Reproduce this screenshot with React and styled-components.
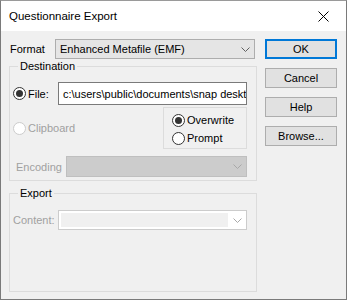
import React from 'react';
import styled, { createGlobalStyle } from 'styled-components';

const GlobalStyle = createGlobalStyle`
  html, body {
    margin: 0;
    padding: 0;
    background: #4a4a4a;
  }
  body {
    font-family: "Liberation Sans", Arial, sans-serif;
    font-size: 11px;
    color: #000;
  }
`;

const Window = styled.div`
  width: 345px;
  height: 298px;
  border: 1px solid #7a7a7a;
  border-top-color: #9a9a9a;
  background: #f0f0f0;
  display: flex;
  flex-direction: column;
  overflow: hidden;
`;

const TitleBar = styled.div`
  height: 30px;
  background: #fff;
  display: flex;
  align-items: center;
  justify-content: space-between;
  padding: 0 0 0 8px;
  font-size: 11.5px;
`;

const CloseBox = styled.div`
  width: 46px;
  height: 30px;
  display: flex;
  align-items: center;
  justify-content: center;
`;

const Body = styled.div`
  flex: 1;
  display: flex;
  padding: 8px 0 0 8px;
`;

const LeftCol = styled.div`
  width: 248px;
  display: flex;
  flex-direction: column;
`;

const RightCol = styled.div`
  margin-left: 8px;
  display: flex;
  flex-direction: column;
  gap: 9px;
`;

const Row = styled.div`
  display: flex;
  align-items: center;
  height: ${(p) => p.h || 20}px;
  margin-top: ${(p) => p.mt || 0}px;
`;

const Label = styled.span`
  box-sizing: border-box;
  width: ${(p) => p.w}px;
  padding-left: ${(p) => p.pl || 0}px;
  color: ${(p) => (p.disabled ? '#a0a0a0' : '#000')};
  white-space: nowrap;
  flex-shrink: 0;
`;

const Select = styled.div`
  width: ${(p) => p.w}px;
  height: ${(p) => p.h || 20}px;
  box-sizing: border-box;
  display: flex;
  align-items: center;
  justify-content: space-between;
  padding: ${(p) => (p.inset ? '2px 0 2px 2px' : '0 0 0 4px')};
  border: 1px solid ${(p) => p.border || '#adadad'};
  background: ${(p) => p.bg || '#e5e5e5'};
  white-space: nowrap;
  line-height: 14px;
`;

const InnerField = styled.div`
  flex: 1;
  height: 100%;
  background: #f0f0f0;
`;

const Arrow = styled.div`
  width: 18px;
  display: flex;
  justify-content: center;
  flex-shrink: 0;
`;

const Group = styled.fieldset`
  margin: 0;
  padding: 0 9px 0 3px;
  border: 1px solid #dcdcdc;
  height: ${(p) => p.h}px;
  box-sizing: border-box;
  display: flex;
  flex-direction: column;
  margin-top: ${(p) => p.mt || 0}px;
  min-width: 0;
`;

const Legend = styled.legend`
  padding: 0 2px;
  margin-left: 5px;
  line-height: 14px;
`;

const TextInput = styled.div`
  width: 189px;
  height: 23px;
  box-sizing: border-box;
  border: 1px solid #7a7a7a;
  background: #fff;
  display: flex;
  align-items: center;
  padding-left: 4px;
  overflow: hidden;
  white-space: nowrap;
  margin-left: auto;
`;

const RadioItem = styled.div`
  display: flex;
  align-items: center;
  gap: 2px;
  line-height: 14px;
  color: ${(p) => (p.disabled ? '#a0a0a0' : '#000')};
`;

const Circle = styled.span`
  width: 13px;
  height: 13px;
  box-sizing: border-box;
  border-radius: 50%;
  border: 1px solid ${(p) => (p.disabled ? '#cccccc' : '#333')};
  background: #fff;
  display: flex;
  align-items: center;
  justify-content: center;
  &::after {
    content: '';
    width: 7px;
    height: 7px;
    border-radius: 50%;
    background: ${(p) => (p.checked ? '#333' : 'transparent')};
  }
`;

const ModeBox = styled.div`
  width: 84px;
  height: 42px;
  box-sizing: border-box;
  border: 1px solid #dcdcdc;
  margin-left: auto;
  padding: 5px 0 0 8px;
  display: flex;
  flex-direction: column;
  gap: 4px;
`;

const Button = styled.div`
  width: 72px;
  height: 20px;
  box-sizing: border-box;
  border: ${(p) => (p.primary ? '2px solid #0078d7' : '1px solid #adadad')};
  background: #e1e1e1;
  display: flex;
  align-items: center;
  justify-content: center;
  line-height: 14px;
`;

const Chevron = ({ color = '#606060' }) => (
  <svg width="9" height="5" viewBox="0 0 9 5">
    <path d="M0.5 0.5 L4.5 4.5 L8.5 0.5" fill="none" stroke={color} strokeWidth="1" />
  </svg>
);

const Radio = ({ checked, disabled, children }) => (
  <RadioItem disabled={disabled}>
    <Circle checked={checked} disabled={disabled} />
    {children}
  </RadioItem>
);

export default function App() {
  return (
    <>
      <GlobalStyle />
      <Window>
        <TitleBar>
          <span>Questionnaire Export</span>
          <CloseBox>
            <svg width="11" height="11" viewBox="0 0 11 11">
              <path d="M0.5 0.5 L10.5 10.5 M10.5 0.5 L0.5 10.5" stroke="#000" strokeWidth="1" />
            </svg>
          </CloseBox>
        </TitleBar>
        <Body>
          <LeftCol>
            <Row>
              <Label w={46} pl={1}>Format</Label>
              <Select w={200}>
                Enhanced Metafile (EMF)
                <Arrow><Chevron /></Arrow>
              </Select>
            </Row>
            <Group h={122} mt={0}>
              <Legend>Destination</Legend>
              <Row h={23} mt={9}>
                <Radio checked>File:</Radio>
                <TextInput>c:\users\public\documents\snap desktop\export.emf</TextInput>
              </Row>
              <Row h={42} mt={2}>
                <Radio disabled>Clipboard</Radio>
                <ModeBox>
                  <Radio checked>Overwrite</Radio>
                  <Radio>Prompt</Radio>
                </ModeBox>
              </Row>
              <Row h={21} mt={7}>
                <Label w={53} pl={3} disabled>Encoding</Label>
                <Select w={182} h={21} bg="#cccccc" border="#bfbfbf">
                  <span />
                  <Arrow><Chevron color="#a8a8a8" /></Arrow>
                </Select>
              </Row>
            </Group>
            <Group h={106} mt={5}>
              <Legend>Export</Legend>
              <Row mt={10}>
                <Label w={45} disabled>Content:</Label>
                <Select w={189} bg="#fff" border="#cccccc" inset>
                  <InnerField />
                  <Arrow><Chevron color="#a8a8a8" /></Arrow>
                </Select>
              </Row>
            </Group>
          </LeftCol>
          <RightCol>
            <Button primary>OK</Button>
            <Button>Cancel</Button>
            <Button>Help</Button>
            <Button>Browse...</Button>
          </RightCol>
        </Body>
      </Window>
    </>
  );
}
